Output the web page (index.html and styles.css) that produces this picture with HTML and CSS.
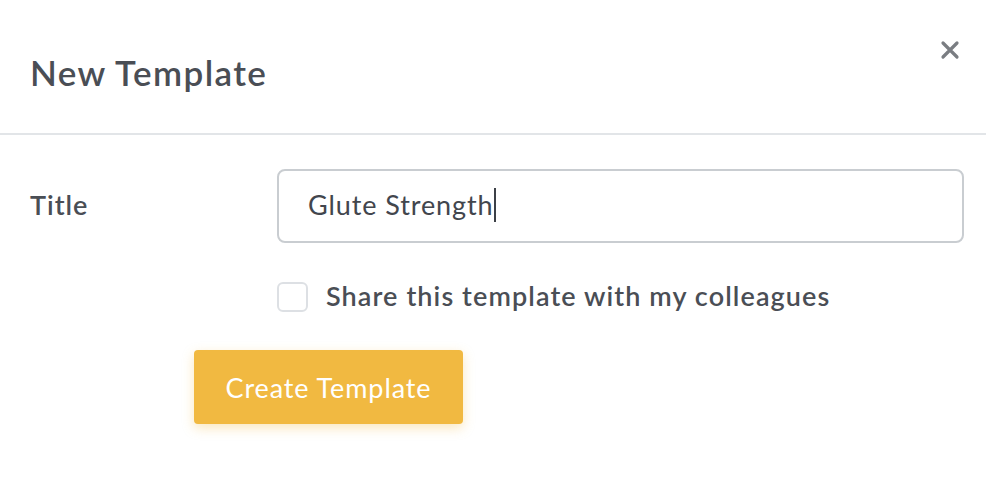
FILE: index.html
```html
<!DOCTYPE html>
<html>
<head>
<meta charset="utf-8">
<link rel="stylesheet" href="styles.css">
</head>
<body>
<div class="modal">
  <header class="modal-header">
    <h1 class="modal-title">New Template</h1>
    <button class="close" aria-label="Close">
      <svg width="20" height="20" viewBox="0 0 20 20"><path d="M3 3 L17 17 M17 3 L3 17" stroke="#7a7d82" stroke-width="3.2" stroke-linecap="round"/></svg>
    </button>
  </header>
  <div class="modal-body">
    <div class="row">
      <label class="label">Title</label>
      <div class="input"><span class="value">Glute Strength</span><span class="caret"></span></div>
    </div>
    <div class="check-row">
      <span class="checkbox"></span>
      <span class="check-label">Share this template with my colleagues</span>
    </div>
    <div class="actions">
      <button class="btn">Create Template</button>
    </div>
  </div>
</div>
</body>
</html>
```
FILE: styles.css
```css
html, body { margin: 0; padding: 0; background: #fff; }
body { font-family: "Lato", "Noto Sans", sans-serif; color: #4a4e55; }
.modal { width: 986px; height: 488px; }
.modal-header {
  height: 135px;
  border-bottom: 2px solid #e2e5e8;
  display: flex;
  align-items: flex-start;
  justify-content: space-between;
  box-sizing: border-box;
  padding: 0 24px 0 30px;
}
.modal-title { margin: 52px 0 0; font-size: 35px; line-height: 40px; font-weight: 600; color: #4a4e55; letter-spacing: 1.4px; }
.close { margin-top: 40px; background: none; border: 0; padding: 0; width: 24px; height: 20px; }
.modal-body { padding: 34px 22px 0 30px; }
.row { display: flex; align-items: center; }
.label { width: 247px; font-size: 27px; font-weight: 600; letter-spacing: 1px; margin-bottom: 3px; }
.input {
  flex: 1; height: 74px; box-sizing: border-box;
  border: 2px solid #c9cdd1; border-radius: 8px;
  display: flex; align-items: center; padding: 0 0 3px 29px;
  font-size: 27px; color: #42464d; letter-spacing: 0.9px;
}
.caret { display: inline-block; width: 2px; height: 34px; background: #3c4047; margin-left: 0; }
.check-row { display: flex; align-items: center; margin: 37px 0 0 247px; }
.checkbox { width: 27px; height: 26px; border: 2px solid #dde0e4; border-radius: 6px; margin-right: 18px; }
.check-label { font-size: 27px; line-height: 32px; font-weight: 600; letter-spacing: 1.1px; color: #4a4e55; padding-bottom: 1px; }
.actions { margin: 37px 0 0 164px; }
.btn {
  width: 269px; height: 74px;
  background: #f1b941; color: #fff; border: 0; border-radius: 4px;
  font-family: inherit; font-size: 27px; font-weight: 400; letter-spacing: 0.9px;
  box-shadow: 0 4px 12px rgba(241, 185, 65, 0.35);
}
```
